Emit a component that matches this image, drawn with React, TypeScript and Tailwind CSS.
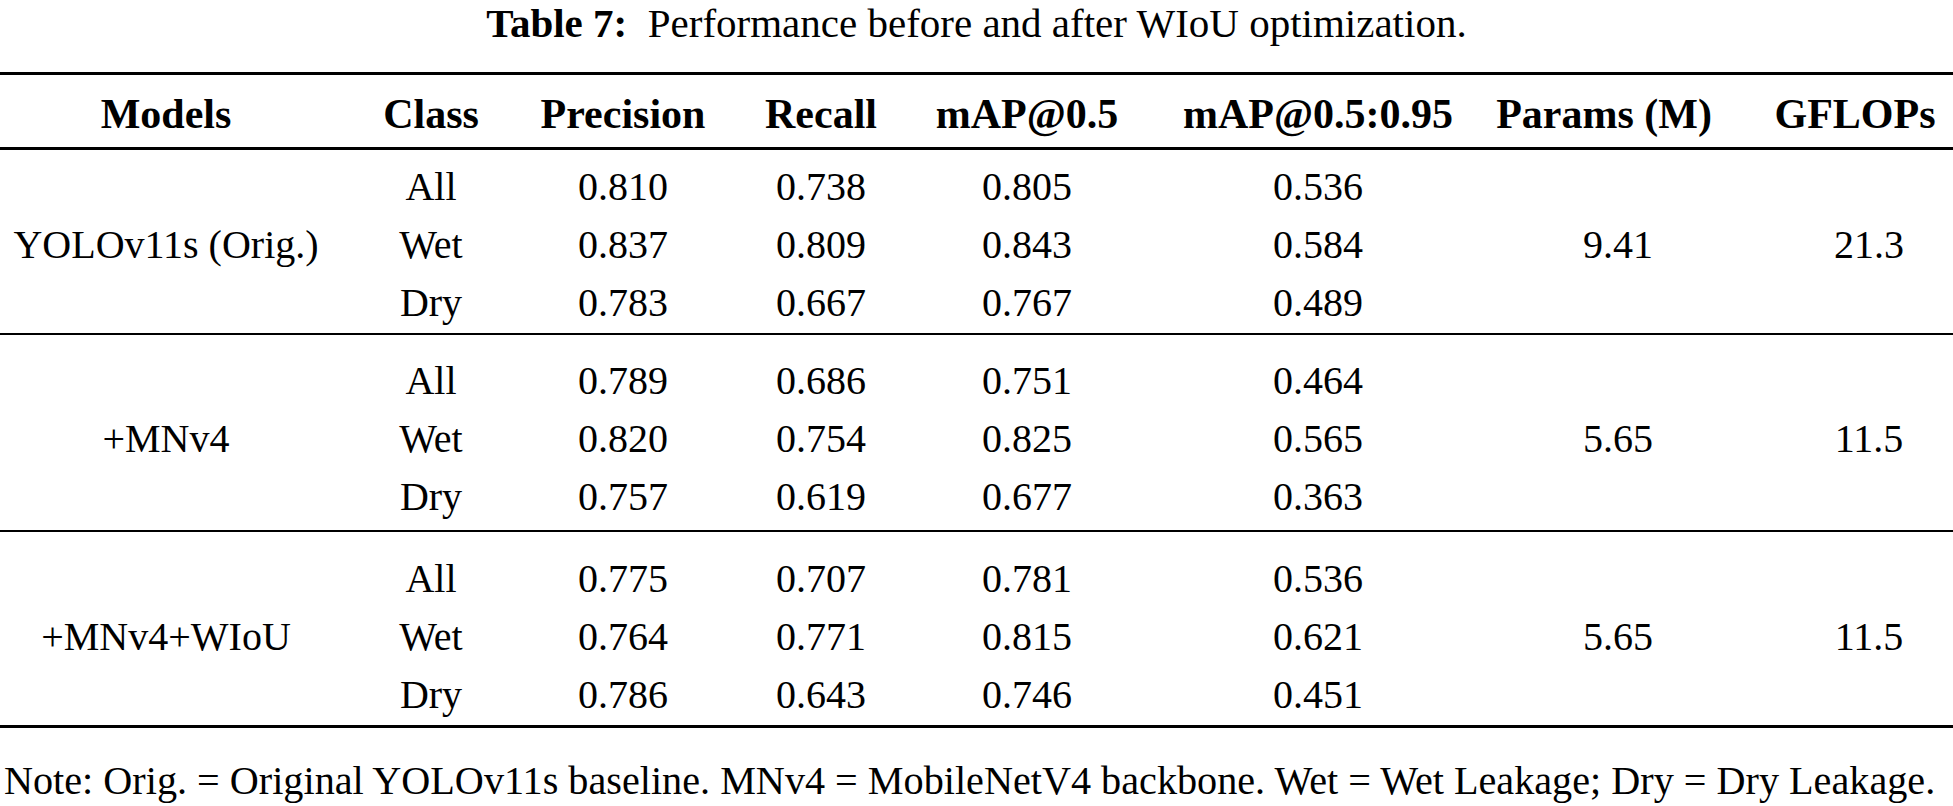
import React from 'react';

type Group = {
  model: string;
  params: string;
  gflops: string;
  rows: { cls: string; p: string; r: string; m50: string; m5095: string }[];
};

const groups: Group[] = [
  {
    model: 'YOLOv11s (Orig.)',
    params: '9.41',
    gflops: '21.3',
    rows: [
      { cls: 'All', p: '0.810', r: '0.738', m50: '0.805', m5095: '0.536' },
      { cls: 'Wet', p: '0.837', r: '0.809', m50: '0.843', m5095: '0.584' },
      { cls: 'Dry', p: '0.783', r: '0.667', m50: '0.767', m5095: '0.489' },
    ],
  },
  {
    model: '+MNv4',
    params: '5.65',
    gflops: '11.5',
    rows: [
      { cls: 'All', p: '0.789', r: '0.686', m50: '0.751', m5095: '0.464' },
      { cls: 'Wet', p: '0.820', r: '0.754', m50: '0.825', m5095: '0.565' },
      { cls: 'Dry', p: '0.757', r: '0.619', m50: '0.677', m5095: '0.363' },
    ],
  },
  {
    model: '+MNv4+WIoU',
    params: '5.65',
    gflops: '11.5',
    rows: [
      { cls: 'All', p: '0.775', r: '0.707', m50: '0.781', m5095: '0.536' },
      { cls: 'Wet', p: '0.764', r: '0.771', m50: '0.815', m5095: '0.621' },
      { cls: 'Dry', p: '0.786', r: '0.643', m50: '0.746', m5095: '0.451' },
    ],
  },
];

const headers = [
  { label: 'Models', cls: '' },
  { label: 'Class', cls: '' },
  { label: 'Precision', cls: '' },
  { label: 'Recall', cls: '' },
  { label: 'mAP@0.5', cls: '' },
  { label: 'mAP@0.5:0.95', cls: '' },
  { label: 'Params (M)', cls: 'pr-[28px]' },
  { label: 'GFLOPs', cls: 'pr-[28px]' },
];

// column widths chosen so the centres line up with the original table
const cols = 'grid grid-cols-[332px_198px_186px_210px_202px_380px_220px_282px]';

function Cell({ children, className = '' }: { children: React.ReactNode; className?: string }) {
  return <div className={`flex items-center justify-center whitespace-nowrap ${className}`}>{children}</div>;
}

export default function App() {
  return (
    <div className="w-[1953px] h-[806px] overflow-hidden bg-white text-black font-['Liberation_Serif',serif] text-[40px]">
      {/* Caption */}
      <div className="text-[41px] leading-[47px] text-center whitespace-nowrap">
        <span className="font-bold">Table 7:</span>
        <span>&nbsp; Performance before and after WIoU optimization.</span>
      </div>

      {/* Table */}
      <div className="mt-[25px] h-[3px] bg-black" />
      <div className={`${cols} pt-[6px] h-[72px] font-bold text-[42px]`}>
        {headers.map((h) => (
          <Cell key={h.label} className={`leading-[66px] ${h.cls}`}>{h.label}</Cell>
        ))}
      </div>
      <div className="h-[3px] bg-black" />

      {groups.map((g, gi) => (
        <React.Fragment key={g.model}>
          <div className={`${cols} grid-rows-[58px_58px_58px] ${gi === 0 ? 'pt-[8px] pb-[1px]' : gi === 1 ? 'pt-[17px] pb-[4px]' : 'pt-[18px] pb-[1px]'}`}>
            <Cell className="row-span-3">{g.model}</Cell>
            {g.rows.map((r, ri) => (
              <React.Fragment key={r.cls}>
                <Cell className="leading-[58px] col-start-2">{r.cls}</Cell>
                <Cell className="leading-[58px]">{r.p}</Cell>
                <Cell className="leading-[58px]">{r.r}</Cell>
                <Cell className="leading-[58px]">{r.m50}</Cell>
                <Cell className="leading-[58px]">{r.m5095}</Cell>
                {ri === 0 && (
                  <>
                    <Cell className="row-span-3">{g.params}</Cell>
                    <Cell className="row-span-3">{g.gflops}</Cell>
                  </>
                )}
              </React.Fragment>
            ))}
          </div>
          <div className={gi === groups.length - 1 ? 'h-[3px] bg-black' : 'h-[2px] bg-black'} />
        </React.Fragment>
      ))}

      {/* Note */}
      <div className="mt-[24px] leading-[58px] pl-[4px] whitespace-nowrap text-[40.2px]">
        Note: Orig. = Original YOLOv11s baseline. MNv4 = MobileNetV4 backbone. Wet = Wet Leakage; Dry = Dry Leakage.
      </div>
    </div>
  );
}
